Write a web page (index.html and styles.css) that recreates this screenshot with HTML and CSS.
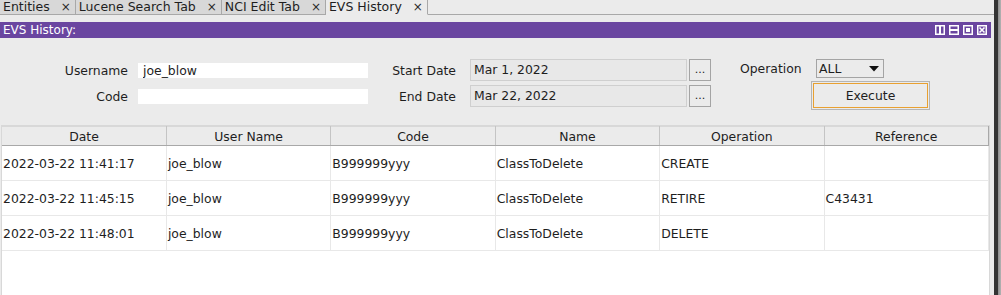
FILE: index.html
```html
<!DOCTYPE html>
<html lang="en">
  <head>
    <meta charset="UTF-8" />
    <title>EVS History</title>
    <link rel="stylesheet" href="styles.css">
  </head>
  <body>
    <div class="screen">
      <div class="app">
        <div class="tabs">
          <div class="tab">Entities <span class="close">×</span></div>
          <div class="tab">Lucene Search Tab <span class="close">×</span></div>
          <div class="tab">NCI Edit Tab <span class="close">×</span></div>
          <div class="tab active">EVS History <span class="close">×</span></div>
          <div class="tab-fill"></div>
        </div>

        <div class="panel">
          <div class="titlebar">
            <span>EVS History:</span>
            <div class="controls">
              <svg width="10" height="10" viewBox="0 0 10 10"><rect width="10" height="10" fill="#fff"/><rect x="1.5" y="1.5" width="2.5" height="7" fill="#6a46a0"/><rect x="6" y="1.5" width="2.5" height="7" fill="#6a46a0"/></svg>
              <svg width="10" height="10" viewBox="0 0 10 10"><rect width="10" height="10" fill="#fff"/><rect x="1.5" y="1.5" width="7" height="2.5" fill="#6a46a0"/><rect x="1.5" y="6" width="7" height="2.5" fill="#6a46a0"/></svg>
              <svg width="10" height="10" viewBox="0 0 10 10"><rect width="10" height="10" fill="#fff"/><rect x="1.5" y="1.5" width="7" height="7" fill="#6a46a0"/><rect x="3" y="3" width="4" height="4" fill="#fff"/></svg>
              <svg width="10" height="10" viewBox="0 0 10 10"><rect width="10" height="10" fill="#fff"/><rect x="1.5" y="1.5" width="7" height="7" fill="#6a46a0"/><path d="M2.5 2.5 L7.5 7.5 M7.5 2.5 L2.5 7.5" stroke="#fff" stroke-width="1.6"/></svg>
            </div>
          </div>

          <div class="filters">
            <div class="group users">
              <label for="username">Username</label>
              <input type="text" id="username" value="joe_blow" />
              <label for="code">Code</label>
              <input type="text" id="code" value="" />
            </div>

            <div class="group dates">
              <label>Start Date</label>
              <div class="date-field">
                <span class="date">Mar 1, 2022</span>
                <button class="pick">...</button>
              </div>
              <label>End Date</label>
              <div class="date-field">
                <span class="date">Mar 22, 2022</span>
                <button class="pick">...</button>
              </div>
            </div>

            <div class="ops">
              <div class="op-row">
                <label>Operation</label>
                <div class="select">
                  <span>ALL</span>
                  <svg width="10" height="6" viewBox="0 0 10 6"><path d="M0 0 H10 L5 5.5 Z" fill="#111"/></svg>
                </div>
              </div>
              <button class="execute"><span>Execute</span></button>
            </div>
          </div>

          <div class="grid">
            <table>
              <thead>
                <tr>
                  <th>Date</th>
                  <th>User Name</th>
                  <th>Code</th>
                  <th>Name</th>
                  <th>Operation</th>
                  <th>Reference</th>
                </tr>
              </thead>
              <tbody>
                <tr>
                  <td>2022-03-22 11:41:17</td>
                  <td>joe_blow</td>
                  <td>B999999yyy</td>
                  <td>ClassToDelete</td>
                  <td>CREATE</td>
                  <td></td>
                </tr>
                <tr>
                  <td>2022-03-22 11:45:15</td>
                  <td>joe_blow</td>
                  <td>B999999yyy</td>
                  <td>ClassToDelete</td>
                  <td>RETIRE</td>
                  <td>C43431</td>
                </tr>
                <tr>
                  <td>2022-03-22 11:48:01</td>
                  <td>joe_blow</td>
                  <td>B999999yyy</td>
                  <td>ClassToDelete</td>
                  <td>DELETE</td>
                  <td></td>
                </tr>
              </tbody>
            </table>
          </div>
        </div>
      </div>
      <div class="edge"></div>
    </div>
  </body>
</html>
```

FILE: styles.css
```css
html,
body {
  margin: 0;
  height: 100%;
}
body {
  font-family: "DejaVu Sans", "Liberation Sans", sans-serif;
  font-size: 12.4px;
  color: #1e1e1e;
  background-color: #ebebeb;
  overflow: hidden;
}
.screen {
  display: flex;
  height: 295px;
}
.app {
  width: 994px;
  display: flex;
  flex-direction: column;
}
.edge {
  width: 7px;
  border-left: 4px solid #333333;
  box-sizing: border-box;
  background: linear-gradient(to right, #8c8c8c, #b4b4b4);
}

/* tabs */
.tabs {
  display: flex;
  height: 15px;
}
.tab {
  display: flex;
  align-items: center;
  gap: 11px;
  padding: 0 4px 0 3px;
  background: #d8d8d8;
  border-right: 1px solid #a8a8a8;
  border-bottom: 1px solid #a8a8a8;
  font-size: 12.5px;
  line-height: 14px;
  white-space: nowrap;
}
.tab.active {
  background: #ebebeb;
  border-bottom-color: #ebebeb;
}
.tab .close {
  font-size: 12px;
  color: #2a2a2a;
}
.tab-fill {
  flex: 1;
  border-bottom: 1px solid #a8a8a8;
}

/* panel */
.panel {
  flex: 1;
  display: flex;
  flex-direction: column;
  min-height: 0;
}
.titlebar {
  display: flex;
  align-items: center;
  justify-content: space-between;
  height: 16px;
  margin: 7px 3px 0 0;
  padding: 0 4px 0 3px;
  background: #6a46a0;
  color: #ffffff;
  font-size: 12px;
}
.controls {
  display: flex;
  gap: 4px;
}
.controls svg {
  display: block;
}

/* filter form */
.filters {
  display: flex;
  padding-top: 19px;
}
.group {
  display: grid;
  grid-auto-rows: 26px;
  align-items: center;
}
.group label {
  text-align: right;
}
.users {
  grid-template-columns: 128px 230px;
  column-gap: 10px;
}
.users input {
  height: 15px;
  padding: 0 0 0 5px;
  border: none;
  background: #ffffff;
  font: inherit;
  color: inherit;
  box-sizing: border-box;
  outline: none;
}
.dates {
  margin-left: 24px;
  grid-template-columns: 64px 241px;
  column-gap: 14px;
}
.date-field {
  display: flex;
  gap: 2px;
  height: 22px;
}
.date {
  width: 217px;
  padding-left: 3px;
  line-height: 20px;
  background: #e8e8e8;
  border: 1px solid #cfcfcf;
  box-sizing: border-box;
}
.pick {
  width: 22px;
  padding: 0;
  background: #ebebeb;
  border: 1px solid #a4a4a4;
  font: inherit;
  font-size: 11px;
  color: #1e1e1e;
  line-height: 18px;
}
.ops {
  display: flex;
  flex-direction: column;
  align-items: flex-start;
  margin-left: 29px;
  padding-top: 2px;
}
.op-row {
  display: flex;
  align-items: center;
  gap: 14px;
}
.op-row label {
  width: 62px;
}
.select {
  display: flex;
  align-items: center;
  justify-content: space-between;
  width: 68px;
  height: 19px;
  padding: 0 4px 0 2px;
  background: #ebebeb;
  border: 1px solid #a4a4a4;
  box-sizing: border-box;
}
.execute {
  margin: 3px 0 0 71px;
  width: 119px;
  height: 29px;
  padding: 1px;
  background: #ebebeb;
  border: 1px solid #b4b4b4;
  font: inherit;
  color: #1e1e1e;
}
.execute span {
  display: flex;
  align-items: center;
  justify-content: center;
  height: 100%;
  border: 1px solid #e8a030;
  box-sizing: border-box;
}

/* history table */
.grid {
  flex: 1;
  margin: 15px 4px 0 1px;
  background: #ffffff;
  border: 1px solid #d8d8d8;
  border-bottom: none;
}
table {
  width: 100%;
  border-collapse: collapse;
  table-layout: fixed;
}
th {
  height: 18px;
  padding: 0;
  font-weight: normal;
  background: #ebebeb;
  border-right: 1px solid #c4c4c4;
  border-bottom: 1px solid #a8a8a8;
  border-top: 1px solid #d8d8d8;
}
th:last-child {
  border-right: 1px solid #a8a8a8;
}
td {
  height: 34px;
  padding: 0 0 0 1px;
  border-right: 1px solid #e8e8e8;
  border-bottom: 1px solid #e8e8e8;
  white-space: nowrap;
}
```
